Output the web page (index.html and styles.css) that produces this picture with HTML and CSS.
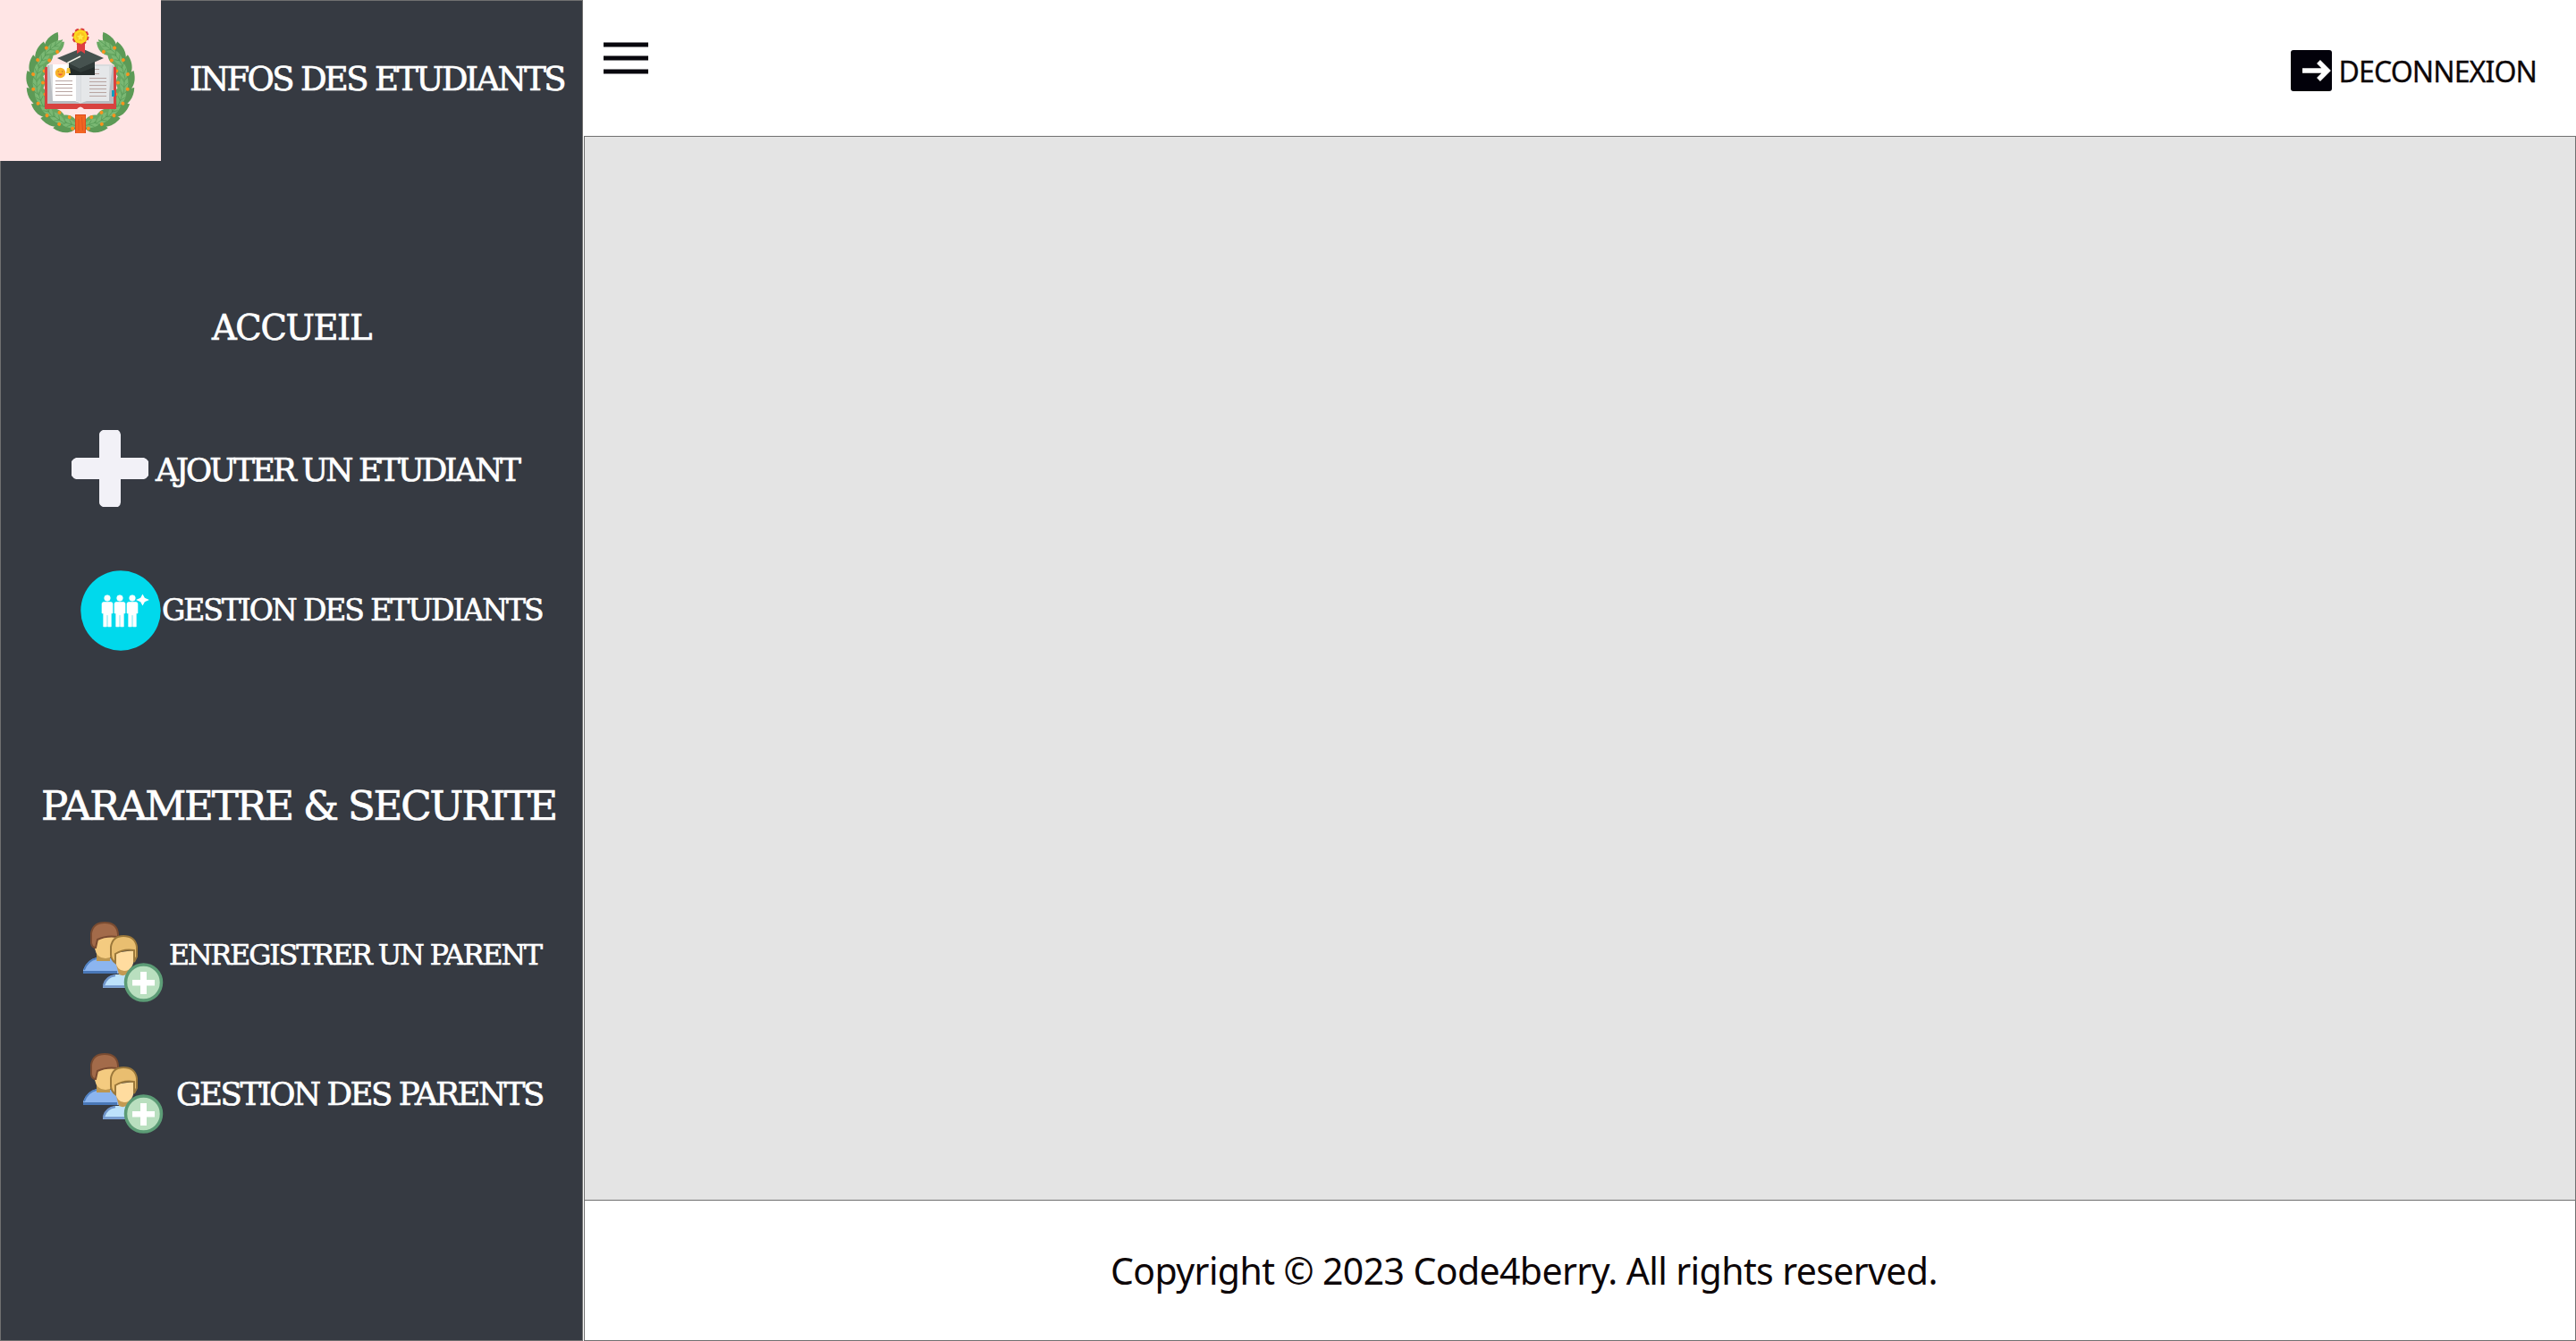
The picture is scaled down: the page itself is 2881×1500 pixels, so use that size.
FILE: index.html
```
<!DOCTYPE html>
<html lang="fr">
<head>
<meta charset="utf-8">
<title>Infos des étudiants</title>
<link rel="stylesheet" href="styles.css">
</head>
<body>
<svg class="defs" width="0" height="0" aria-hidden="true">
  <defs>
    <g id="sprig">
      <path d="M-12 3C-10-9 2-13 14-9C9 1-1 6-12 3Z" fill="#5c9a56"/>
      <path d="M-12 1C-8-4 4-4 13 4C5 13-8 12-12 1Z" fill="#68a862"/>
      <path d="M-12 1C-6-5 4-5 13 1C5 7-6 8-12 1Z" fill="#7ab873"/>
      <path d="M-12 1C-4 1 4 1 13 1M-5 1L0-3M-5 1L-1 5M2 1L6-2M1 1L5 4" fill="none" stroke="#4f9450" stroke-width=".6"/>
      <circle cx="-7" cy="-3" r="2" fill="#f7931e"/>
      <circle cx="0" cy="8" r="2" fill="#f7931e"/>
    </g>
    <g id="branch">
      <use href="#sprig" transform="rotate(-163) translate(0 -50)"/>
      <use href="#sprig" transform="rotate(-146) translate(0 -50)"/>
      <use href="#sprig" transform="rotate(-128) translate(0 -50)"/>
      <use href="#sprig" transform="rotate(-110) translate(0 -50)"/>
      <use href="#sprig" transform="rotate(-92) translate(0 -50)"/>
      <use href="#sprig" transform="rotate(-74) translate(0 -50)"/>
      <use href="#sprig" transform="rotate(-56) translate(0 -50)"/>
      <use href="#sprig" transform="rotate(-38) translate(0 -50)"/>
    </g>
    <g id="student">
      <circle cx="0" cy="-14" r="3.300"/>
      <path d="M-4-9.500H4Q6-9.500 6-7.500V3H4.300V18H.6V5H-.6V18H-4.300V3H-6V-7.500Q-6-9.500-4-9.500Z"/>
    </g>
    <symbol id="parents" viewBox="0 0 90 90">
      <path d="M0 58V54Q4 43 15 40H29Q42 44 42 58Z" fill="#8cb5ef"/>
      <path d="M0 56.500H38" stroke="#4a78b8" stroke-width="3"/>
      <path d="M1 54Q5 43 15 41" fill="none" stroke="#4f80c2" stroke-width="2"/>
      <path d="M15 32H30V44H15Z" fill="#bd9750"/>
      <path d="M12 16H38V30Q35 41 25 41Q15 41 13 30Z" fill="#f4cb80"/>
      <path d="M9 24V13Q11 1 24 1Q38 1 39 14V17Q26 15 16 20L14 29Q10 29 9 24Z" fill="#a36b4a" stroke="#794b31" stroke-width="2"/>
      <path d="M22 73Q25 61 36 59H50Q58 62 58 74H22Z" fill="#bde2fb"/>
      <path d="M22 72.500H48M23 71Q26 61 36 60" fill="none" stroke="#7095ca" stroke-width="2.500"/>
      <path d="M37 48H52V57Q46 62 40 59Z" fill="#c49a52"/>
      <path d="M34 35L57 32V40Q56 55 46 55Q38 55 36 44Z" fill="#ffdc9f"/>
      <path d="M31 37V28Q33 16 45 16Q58 16 60 28V39L57 45V32Q45 30 36 36V46Q31 42 31 37Z" fill="#e9be70" stroke="#9b783b" stroke-width="2"/>
      <circle cx="67.500" cy="68" r="20" fill="#b9dfbf" stroke="#5c9c76" stroke-width="3.500"/>
      <path d="M64 56H71V65H80V71.500H71V81H64V71.500H55V65H64Z" fill="#fff"/>
    </symbol>
  </defs>
</svg>
<div class="app">
  <aside class="sidebar">
    <div class="brand">
      <svg class="logo" viewBox="0 0 180 180">
        <rect width="180" height="180" fill="#ffe5e5"/>
        <g transform="translate(90 91)">
          <use href="#branch"/>
          <use href="#branch" transform="scale(-1 1)"/>
        </g>
        <rect x="84" y="128" width="12" height="21" fill="#f26522"/>
        <path d="M84.500 128V149M95.500 128V149M84 128.500H96" fill="none" stroke="#dc4a20"/>
        <path d="M88 133V146M91.500 131L92.500 146" fill="none" stroke="#d9501f" stroke-width=".8"/>
        <path d="M50 75H130V122H94Q90 117 86 122H50Z" fill="#d8423f"/>
        <path d="M53 73H127V116H53Z" fill="#b9bdc2"/>
        <path d="M55 72L59 113H86L90 116L94 113H121L126 72Z" fill="#d9dcde"/>
        <path d="M59 72H86L90 77V115L84 113H59Z" fill="#fff"/>
        <path d="M96 74H122V113H97L91 115V78Z" fill="#e5e7e9"/>
        <path d="M85 79V113L90 115V79Z" fill="#dfe2e6"/>
        <path d="M62 90.500H81M62 94.500H81M62 98.500H81M62 102.500H81M62 106.500H81M100 77.500H111M100 82.500H111M100 87.500H119M100 91.500H119M100 95.500H119M100 99.500H119M100 103.500H119M100 107.500H119" stroke="#b8a5a2" stroke-width="1.200"/>
        <rect x="125" y="101" width="3" height="7" fill="#139dbb"/>
        <circle cx="67.500" cy="81.500" r="5.700" fill="#f9b42c"/>
        <path d="M64.500 82.500Q67.500 86.500 70.500 82.500Z" fill="#e95e39"/>
        <path d="M64.500 80H66M69 80H70.500" stroke="#b9741f"/>
        <path d="M77 68H106V84H77Z" fill="#242c2b"/>
        <path d="M64 65L91 54L116 65L89 77Z" fill="#46524f"/>
        <path d="M77 71L89 77L106 69V75L90 81L77 75Z" fill="#303a38"/>
        <path d="M90 63L76 70V77" fill="none" stroke="#f2f2e8" stroke-width="1.500"/>
        <path d="M75 76H78L79 82H74Z" fill="#f3c63c"/>
        <path d="M86 49H95V60L90.500 57L86 60Z" fill="#df3f42"/>
        <circle cx="90" cy="41" r="8.500" fill="#e6b31f" stroke="#dc3b3b" stroke-width="2" stroke-dasharray="4 2.700"/>
        <circle cx="90" cy="41" r="7.500" fill="#fdd921"/>
        <circle cx="90" cy="41" r="5" fill="#fbc41e"/>
        <path d="M90 37L91.200 39.800L94 40L92 42L92.500 45L90 43.500L87.500 45L88 42L86 40L88.800 39.800Z" fill="#ffe843"/>
      </svg>
      <h1 class="brand-name">INFOS DES ETUDIANTS</h1>
    </div>
    <nav class="nav">
      <a class="nav-home">ACCUEIL</a>
      <a class="nav-item add-student">
        <svg width="86" height="86" viewBox="0 0 86 86"><path d="M35 0H52Q55 2 55 5V31H81Q84 32 86 35V51Q84 54 81 55H55V81Q55 84 52 86H35Q31 84 31 81V55H5Q2 54 0 51V35Q2 32 5 31H31V5Q31 2 35 0Z" fill="#f2f1f7"/></svg>
        <span>AJOUTER UN ETUDIANT</span>
      </a>
      <a class="nav-item manage-students">
        <svg width="90" height="90" viewBox="0 0 90 90">
          <circle cx="45" cy="45" r="44.700" fill="#00d9ec"/>
          <g fill="#fff" stroke="#fff" stroke-width=".6"><use href="#student" x="30" y="45"/><use href="#student" x="44" y="45"/><use href="#student" x="58" y="45"/>
          <path d="M69.500 28L71.500 31.500L75 33L71.500 34.500L69.500 38L67.500 34.500L64 33L67.500 31.500Z" stroke-width="1.500"/></g>
        </svg>
        <span>GESTION DES ETUDIANTS</span>
      </a>
      <h2 class="nav-heading">PARAMETRE &amp; SECURITE</h2>
      <a class="nav-item add-parent">
        <svg width="90" height="90"><use href="#parents"/></svg>
        <span>ENREGISTRER UN PARENT</span>
      </a>
      <a class="nav-item manage-parents">
        <svg width="90" height="90"><use href="#parents"/></svg>
        <span>GESTION DES PARENTS</span>
      </a>
    </nav>
  </aside>
  <div class="page">
    <header class="topbar">
      <svg class="menu" width="50" height="36" viewBox="0 0 50 36"><path d="M0 3H50M0 18H50M0 33H50" stroke="#08070d" stroke-width="5"/></svg>
      <a class="logout">
        <svg width="46" height="46" viewBox="0 0 46 46"><rect width="46" height="46" rx="3" fill="#02010a"/><path d="M13 23H41M31 13L41 23L31 33" fill="none" stroke="#fff" stroke-width="5.500"/></svg>
        <span>DECONNEXION</span>
      </a>
    </header>
    <main class="content"></main>
    <footer class="footer">Copyright © 2023 Code4berry. All rights reserved.</footer>
  </div>
</div>
</body>
</html>
```
FILE: styles.css
```
* { box-sizing: border-box; }

body {
  margin: 0;
  background: #fff;
}

svg { display: block; flex: none; }

.defs { display: none; }

.app {
  display: flex;
  gap: 1px;
  height: 1500px;
}

.sidebar {
  width: 652px;
  flex: none;
  background: #363a42;
  border: 1px solid #707070;
  color: #fff;
  font-family: "DejaVu Serif", serif;
  -webkit-text-stroke: 0.7px #fff;
  white-space: nowrap;
}

.brand {
  display: flex;
  height: 180px;
  margin: -1px 0 0 -1px;
}

.logo { width: 180px; height: 180px; }

.brand-name {
  margin: 69px 0 0 32px;
  font-size: 37px;
  font-weight: 400;
  line-height: 40px;
  letter-spacing: -2.7px;
}

.nav {
  display: flex;
  flex-direction: column;
  padding-top: 147px;
}

.nav-home {
  padding-left: 236px;
  font-size: 38.4px;
  line-height: 80px;
  letter-spacing: -1.35px;
}

.nav-item {
  display: flex;
  align-items: center;
  height: 90px;
}

.add-student {
  margin-top: 72px;
  padding-left: 79px;
  gap: 8px;
  font-size: 35.6px;
  letter-spacing: -2.95px;
}

.add-student span { padding-top: 2px; }

.manage-students {
  margin-top: 69px;
  padding-left: 89px;
  gap: 1px;
  font-size: 33px;
  letter-spacing: -2.07px;
}

.manage-students span { padding-bottom: 2px; }

.nav-heading {
  margin: 134px 0 0;
  padding-left: 45px;
  font-size: 45px;
  font-weight: 400;
  line-height: 80px;
  letter-spacing: -2.2px;
}

.add-parent {
  margin-top: 89px;
  padding-left: 92px;
  gap: 6px;
  font-size: 31.5px;
  letter-spacing: -2.02px;
}

.add-parent span { padding-bottom: 17px; }

.manage-parents {
  margin-top: 57px;
  padding-left: 92px;
  gap: 14px;
  font-size: 35.6px;
  letter-spacing: -2.46px;
}

.page {
  flex: 1;
  display: flex;
  flex-direction: column;
  font-family: "Noto Sans", sans-serif;
  color: #0d0608;
}

.topbar {
  display: flex;
  justify-content: space-between;
  height: 152px;
  padding: 47px 44px 0 22px;
}

.logout {
  display: flex;
  align-items: center;
  gap: 8px;
  height: 46px;
  margin-top: 9px;
  font-size: 32px;
  letter-spacing: -0.88px;
  -webkit-text-stroke: 0.3px #0d0608;
}

.logout svg { margin-left: -1px; }

.content {
  height: 1191px;
  background: #e4e4e4;
  border: 1px solid #707070;
}

.footer {
  flex: 1;
  border: 1px solid #707070;
  border-top: 0;
  padding-left: 588px;
  font-size: 41px;
  line-height: 156px;
  letter-spacing: -0.61px;
  word-spacing: 0;
  white-space: nowrap;
}
```
